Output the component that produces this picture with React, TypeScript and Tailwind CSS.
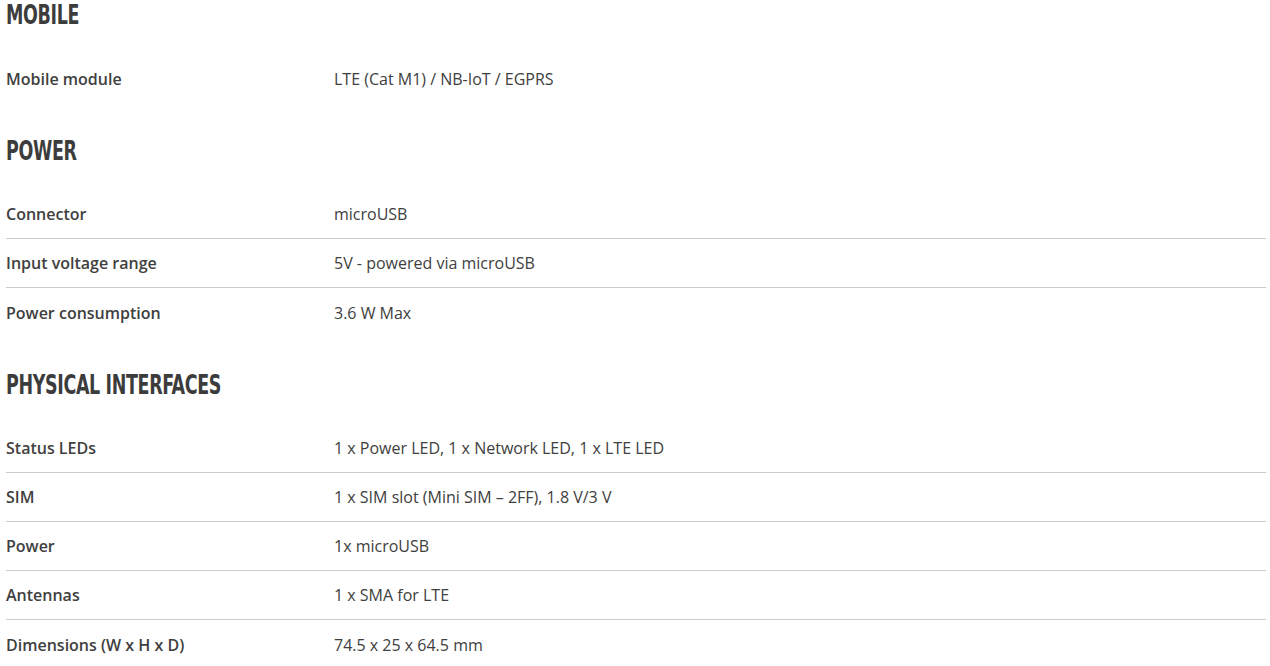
const sections = [
  {
    title: "MOBILE",
    rows: [["Mobile module", "LTE (Cat M1) / NB-IoT / EGPRS"]],
  },
  {
    title: "POWER",
    rows: [
      ["Connector", "microUSB"],
      ["Input voltage range", "5V - powered via microUSB"],
      ["Power consumption", "3.6 W Max"],
    ],
  },
  {
    title: "PHYSICAL INTERFACES",
    rows: [
      ["Status LEDs", "1 x Power LED, 1 x Network LED, 1 x LTE LED"],
      ["SIM", "1 x SIM slot (Mini SIM – 2FF), 1.8 V/3 V"],
      ["Power", "1x microUSB"],
      ["Antennas", "1 x SMA for LTE"],
      ["Dimensions (W x H x D)", "74.5 x 25 x 64.5 mm"],
    ],
  },
];

export default function App() {
  return (
    <div className="min-h-screen bg-white px-[6px] text-[#404040] font-['Open_Sans',sans-serif]">
      <div className="w-[1260px]">
        {sections.map((s, i) => (
          <div key={s.title} className={i === 0 ? "" : "mt-[33px]"}>
            <h2 className="h-[30px] leading-[30px] mb-[24px] text-[27px] font-bold text-[#3c3c3c] tracking-[-0.5px] font-['Liberation_Sans_Narrow','DejaVu_Sans_Condensed',sans-serif] origin-left scale-x-[0.72]">
              {s.title}
            </h2>
            <div>
              {s.rows.map(([label, value], j) => (
                <div
                  key={label}
                  className={`flex items-center h-[49px] ${j < s.rows.length - 1 ? "border-b border-[#cbcbcb]" : ""}`}
                >
                  <div className="w-[328px] text-[16px] font-semibold">{label}</div>
                  <div className="text-[16px]">{value}</div>
                </div>
              ))}
            </div>
          </div>
        ))}
      </div>
    </div>
  );
}
